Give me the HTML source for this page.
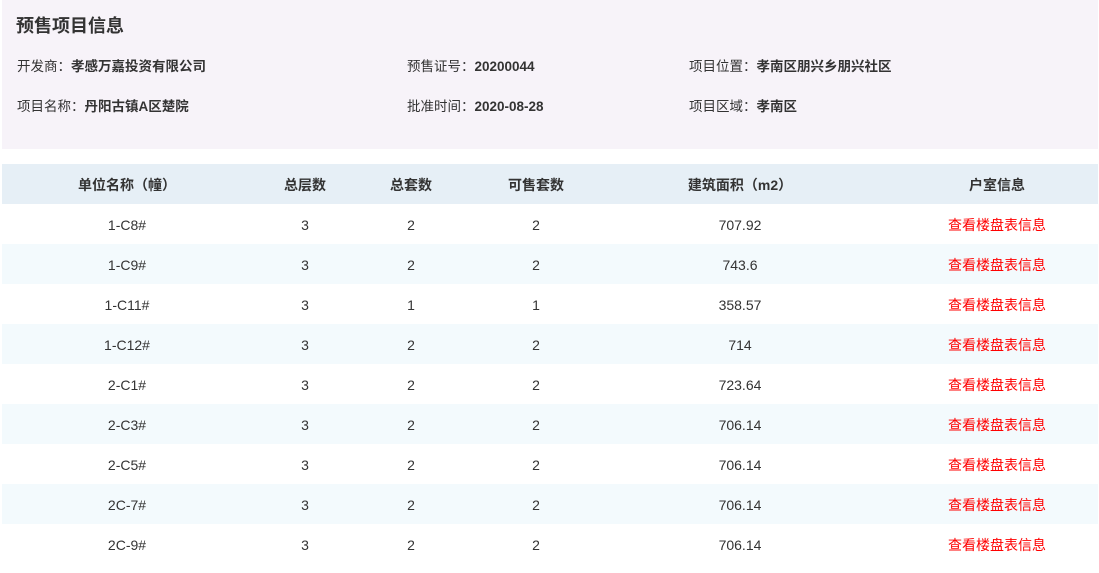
<!DOCTYPE html>
<html><head><meta charset="utf-8"><style>
*{margin:0;padding:0;box-sizing:border-box}
body{width:1099px;height:573px;background:#fff;font-family:"Liberation Sans","Noto Sans CJK SC",sans-serif;color:#333;position:relative;overflow:hidden}
.panel{position:absolute;left:2px;top:0;width:1096px;height:149px;background:#f7f3f9}
.t{position:absolute;white-space:nowrap}
h1{position:absolute;left:16px;top:12px;font-size:18px;font-weight:bold;color:#333}
.info{font-size:13.5px;color:#333}
.info b{font-weight:bold}
.row{position:absolute;left:2px;width:1096px;height:40px}
.c{position:absolute;top:1px;width:200px;margin-left:-100px;text-align:center;line-height:40px;font-size:14px}
.hd .c{font-weight:bold;font-size:14px}
.red{color:#f00;font-size:14px}
</style></head><body>
<div class="panel"></div>
<h1>预售项目信息</h1>
<div class="t info" style="left:17px;top:55px">开发商：<b>孝感万嘉投资有限公司</b></div>
<div class="t info" style="left:407px;top:55px">预售证号：<b>20200044</b></div>
<div class="t info" style="left:689px;top:55px">项目位置：<b>孝南区朋兴乡朋兴社区</b></div>
<div class="t info" style="left:17px;top:95px">项目名称：<b>丹阳古镇A区楚院</b></div>
<div class="t info" style="left:407px;top:95px">批准时间：<b>2020-08-28</b></div>
<div class="t info" style="left:689px;top:95px">项目区域：<b>孝南区</b></div>

<div class="row hd" style="top:164px;background:#e6eff6">
<div class="c" style="left:125px">单位名称（幢）</div>
<div class="c" style="left:303px">总层数</div>
<div class="c" style="left:409px">总套数</div>
<div class="c" style="left:534px">可售套数</div>
<div class="c" style="left:738px">建筑面积（m2）</div>
<div class="c" style="left:995px">户室信息</div>
</div>
<div class="row" style="top:204px"><div class="c" style="left:125px">1-C8#</div><div class="c" style="left:303px">3</div><div class="c" style="left:409px">2</div><div class="c" style="left:534px">2</div><div class="c" style="left:738px">707.92</div><div class="c red" style="left:995px">查看楼盘表信息</div></div>
<div class="row" style="top:244px;background:#f3fafd"><div class="c" style="left:125px">1-C9#</div><div class="c" style="left:303px">3</div><div class="c" style="left:409px">2</div><div class="c" style="left:534px">2</div><div class="c" style="left:738px">743.6</div><div class="c red" style="left:995px">查看楼盘表信息</div></div>
<div class="row" style="top:284px"><div class="c" style="left:125px">1-C11#</div><div class="c" style="left:303px">3</div><div class="c" style="left:409px">1</div><div class="c" style="left:534px">1</div><div class="c" style="left:738px">358.57</div><div class="c red" style="left:995px">查看楼盘表信息</div></div>
<div class="row" style="top:324px;background:#f3fafd"><div class="c" style="left:125px">1-C12#</div><div class="c" style="left:303px">3</div><div class="c" style="left:409px">2</div><div class="c" style="left:534px">2</div><div class="c" style="left:738px">714</div><div class="c red" style="left:995px">查看楼盘表信息</div></div>
<div class="row" style="top:364px"><div class="c" style="left:125px">2-C1#</div><div class="c" style="left:303px">3</div><div class="c" style="left:409px">2</div><div class="c" style="left:534px">2</div><div class="c" style="left:738px">723.64</div><div class="c red" style="left:995px">查看楼盘表信息</div></div>
<div class="row" style="top:404px;background:#f3fafd"><div class="c" style="left:125px">2-C3#</div><div class="c" style="left:303px">3</div><div class="c" style="left:409px">2</div><div class="c" style="left:534px">2</div><div class="c" style="left:738px">706.14</div><div class="c red" style="left:995px">查看楼盘表信息</div></div>
<div class="row" style="top:444px"><div class="c" style="left:125px">2-C5#</div><div class="c" style="left:303px">3</div><div class="c" style="left:409px">2</div><div class="c" style="left:534px">2</div><div class="c" style="left:738px">706.14</div><div class="c red" style="left:995px">查看楼盘表信息</div></div>
<div class="row" style="top:484px;background:#f3fafd"><div class="c" style="left:125px">2C-7#</div><div class="c" style="left:303px">3</div><div class="c" style="left:409px">2</div><div class="c" style="left:534px">2</div><div class="c" style="left:738px">706.14</div><div class="c red" style="left:995px">查看楼盘表信息</div></div>
<div class="row" style="top:524px"><div class="c" style="left:125px">2C-9#</div><div class="c" style="left:303px">3</div><div class="c" style="left:409px">2</div><div class="c" style="left:534px">2</div><div class="c" style="left:738px">706.14</div><div class="c red" style="left:995px">查看楼盘表信息</div></div>
</body></html>
